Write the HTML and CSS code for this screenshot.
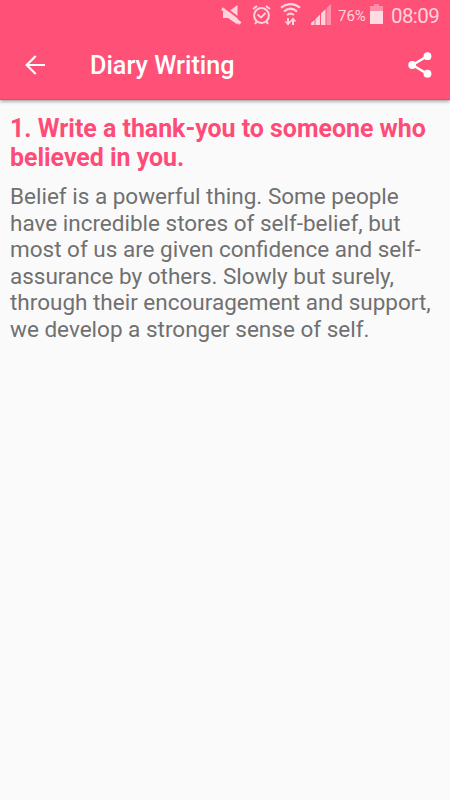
FILE: index.html
```html
<!DOCTYPE html>
<html lang="en">
<head>
    <meta charset="UTF-8">
    <meta name="viewport" content="width=device-width, initial-scale=1.0">
    <title>Diary Writing</title>
    <link rel="stylesheet" href="styles.css">
</head>
<body>
    <header class="header">
        <div class="status-bar">
            <svg class="icon-mute" width="22" height="22" viewBox="0 0 22 22">
                <path d="M2 7h5l9.500-7v19.500L7 13H2z" fill="#ffd3dc"/>
                <path d="M4 2.500l17 13" stroke="#ff5078" stroke-width="2"/>
                <path d="M1 3.500l18.500 15" stroke="#ffd3dc" stroke-width="3"/>
            </svg>
            <svg class="icon-alarm" width="19" height="21" viewBox="0 0 19 21" fill="none" stroke="#ffd3dc" stroke-width="2">
                <circle cx="9.5" cy="11.5" r="7.4"/>
                <path d="M1 5l4-3M18 5l-4-3M5 17l-2 3M14 17l2 3"/>
                <path d="M5.5 10.5l3.5 3 4.5-4.5" stroke-width="1.8"/>
            </svg>
            <svg class="icon-wifi" width="21" height="23" viewBox="0 0 21 23" fill="none" stroke="#ffd3dc" stroke-width="2.2">
                <path d="M1 4.700q9.500-7.400 19 0M4 8.500q6.500-5.500 13 0M7 12q3.500-2.800 7 0"/>
                <path d="M8 15v5M13 22v-5" stroke-width="2"/>
                <path d="M4.500 18.500h7L8 22.500zM9.500 18.500h7L13 14.500z" fill="#ffd3dc" stroke="none"/>
            </svg>
            <svg class="icon-signal" width="21" height="22" viewBox="0 0 21 22">
                <path d="M1 21v-2l3.500-3v5zM5.500 21v-6l4.500-4.500V21zM11 21V9.500l4.500-4.500v16z" fill="#ffd3dc"/>
                <path d="M16.500 21V4l4.500-4v21z" fill="#ff8fa9"/>
            </svg>
            <span class="battery-level">76%</span>
            <svg class="icon-battery" width="13" height="20" viewBox="0 0 13 20">
                <path d="M4 0h5v2h4v5H0V2h4z" fill="#ff8fa9"/>
                <path d="M0 7h13v13H0z" fill="#ffdce3"/>
            </svg>
            <span class="clock">08:09</span>
        </div>
        <div class="toolbar">
            <a href="#" class="back" aria-label="Back">
                <svg width="20" height="20" viewBox="0 0 20 20" fill="none" stroke="#fff" stroke-width="2.2">
                    <path d="M10.700 1L1.700 10l9 9M2 10h18"/>
                </svg>
            </a>
            <h1>Diary Writing</h1>
            <a href="#" class="share" aria-label="Share">
                <svg width="24" height="26" viewBox="0 0 24 26" fill="#fff">
                    <path d="M19.500 4L4.500 13l15 9" fill="none" stroke="#fff" stroke-width="2.4"/>
                    <circle cx="19.5" cy="4.2" r="3.9"/>
                    <circle cx="4.2" cy="13" r="3.9"/>
                    <circle cx="19.5" cy="21.7" r="3.9"/>
                </svg>
            </a>
        </div>
    </header>

    <main class="content">
        <h2>1. Write a thank-you to someone who believed in you.</h2>
        <p>Belief is a powerful thing. Some people have incredible stores of self-belief, but most of us are given confidence and self-assurance by others. Slowly but surely, through their encouragement and support, we develop a stronger sense of self.</p>
    </main>
</body>
</html>
```
FILE: styles.css
```css
body {
    font-family: Roboto, sans-serif;
    height: 100vh;
    margin: 0;
    background-color: #fafafa;
}
.header {
    height: 100px;
    box-sizing: border-box;
    background-color: #ff5078;
    border-bottom: 1px solid #f43e6b;
    box-shadow: 0 1px 4px rgba(0, 0, 0, 0.45);
}
.status-bar {
    display: flex;
    height: 31px;
    padding-left: 221px;
    color: #ffd3dc;
    line-height: 32px;
    white-space: nowrap;
}
.icon-mute {
    margin-top: 5px;
}
.icon-alarm {
    margin: 4px 0 0 9px;
}
.icon-wifi {
    margin: 3px 0 0 9px;
}
.icon-signal {
    margin: 4px 0 0 9px;
}
.battery-level {
    width: 32px;
    margin-left: 7px;
    font-size: 15px;
}
.icon-battery {
    margin-top: 4px;
}
.clock {
    margin-left: 8px;
    font-size: 20.5px;
    letter-spacing: -0.6px;
}
.toolbar {
    display: flex;
    align-items: center;
    height: 68px;
    padding: 0 18px 0 25px;
}
.back,
.share {
    display: flex;
}
h1 {
    flex: 1;
    margin: 0 0 0 45px;
    color: #fff;
    font-size: 25.2px;
    font-weight: 500;
}
.content {
    padding: 14px 10px;
}
h2 {
    margin: 0 0 11px;
    color: #ff4b78;
    font-size: 24.9px;
    font-weight: 700;
    line-height: 29px;
}
p {
    margin: 0;
    color: #707070;
    font-size: 22.5px;
    line-height: 26.6px;
}
```
